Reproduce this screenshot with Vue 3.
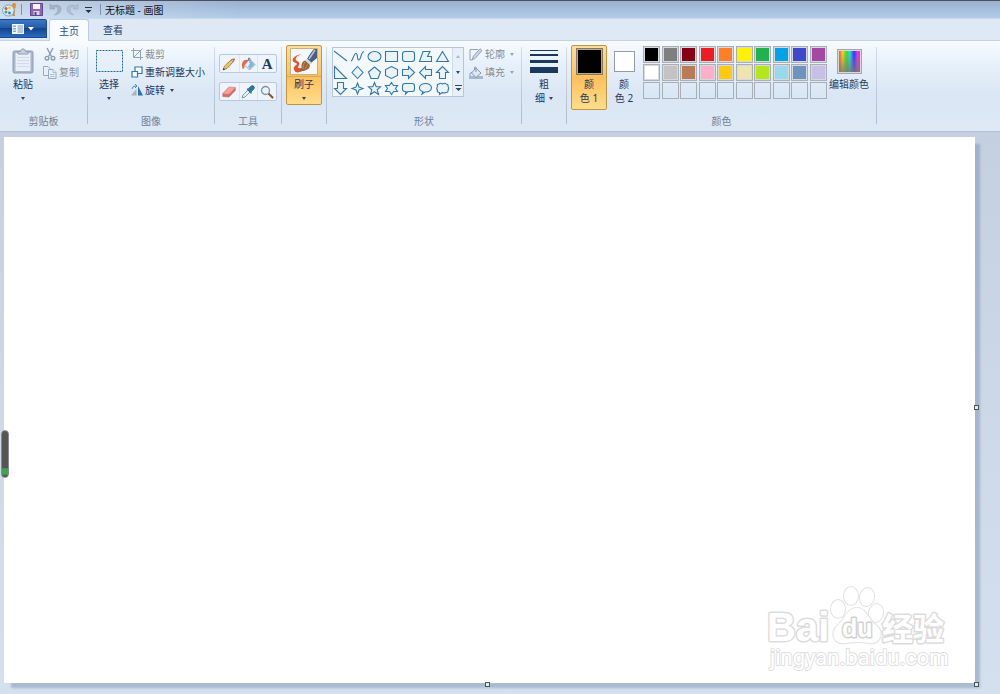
<script setup>
import { ref } from 'vue'

const palette = [
  '#000000', '#7f7f7f', '#880015', '#ed1c24', '#ff7f27', '#fff200', '#22b14c', '#00a2e8', '#3f48cc', '#a349a4',
  '#ffffff', '#c3c3c3', '#b97a57', '#ffaec9', '#ffc90e', '#efe4b0', '#b5e61d', '#99d9ea', '#7092be', '#c8bfe7',
  '', '', '', '', '', '', '', '', '', '',
]

const shapes = [
  { name: '直线', d: 'M1 2L14 12' },
  { name: '曲线', d: 'M1 12C3 12 3.500 4.500 6 4.500C8.500 4.500 6.500 11.500 9 11C11.500 10 10.500 3 14 2.500' },
  { name: '椭圆形', d: 'M1 7.500A6.500 5 0 1 1 14 7.500A6.500 5 0 1 1 1 7.500Z' },
  { name: '矩形', d: 'M1.500 2.500H13.500V12.500H1.500Z' },
  { name: '圆角矩形', d: 'M4 2.500H11Q13.500 2.500 13.500 5V10Q13.500 12.500 11 12.500H4Q1.500 12.500 1.500 10V5Q1.500 2.500 4 2.500Z' },
  { name: '多边形', d: 'M5 2.500H12L9.500 7.500H13.500V12.500H1.500Z' },
  { name: '三角形', d: 'M7.500 2.500L13.500 12.500H1.500Z' },
  { name: '直角三角形', d: 'M1.500 1.500L13.500 13.500H1.500Z' },
  { name: '菱形', d: 'M7.500 1.500L13 7.500L7.500 13.500L2 7.500Z' },
  { name: '五边形', d: 'M7.500 2L13.500 7L11 13.500H4L1.500 7Z' },
  { name: '六边形', d: 'M7.500 1.500L13.500 4.500V10.500L7.500 13.500L1.500 10.500V4.500Z' },
  { name: '右箭头', d: 'M1.500 4.500H7.500V1.500L13.500 7.500L7.500 13.500V10.500H1.500Z' },
  { name: '左箭头', d: 'M13.500 4.500H7.500V1.500L1.500 7.500L7.500 13.500V10.500H13.500Z' },
  { name: '上箭头', d: 'M4.500 13.500V7.500H1.500L7.500 1.500L13.500 7.500H10.500V13.500Z' },
  { name: '下箭头', d: 'M4.500 1.500V7.500H1.500L7.500 13.500L13.500 7.500H10.500V1.500Z' },
  { name: '四角星', d: 'M7.500 2L9 6L13 7.500L9 9L7.500 13L6 9L2 7.500L6 6Z' },
  { name: '五角星', d: 'M7.500 1.500L9.200 5.800H13.500L10.200 8.800L11.500 13.500L7.500 10.700L3.500 13.500L4.800 8.800L1.500 5.800H5.800Z' },
  { name: '六角星', d: 'M7.500 1.500L9.500 4.500H13.500L11.500 7.500L13.500 10.500H9.500L7.500 13.500L5.500 10.500H1.500L3.500 7.500L1.500 4.500H5.500Z' },
  { name: '圆角矩形标注', d: 'M4 2.500H11Q13.500 2.500 13.500 5V8Q13.500 10.500 11 10.500H7L4.500 13L5 10.500H4Q1.500 10.500 1.500 8V5Q1.500 2.500 4 2.500Z' },
  { name: '椭圆形标注', d: 'M4 13L5 10.700C-1 9 1 2.500 7.500 2.500C15.500 2.500 15.500 11 7 11Z' },
  { name: '云形标注', d: 'M4 3Q5.500 1.500 7.500 3Q10 1.500 11 3Q13.500 3 13 5.500Q14.500 7.500 13 9Q13.500 11.500 11 11.500Q9 12.500 7.500 11.500L4.500 13.500V11.500Q1.500 11.500 2.500 9Q1 7.500 2.500 5.500Q1.500 3 4 3Z' },
]

const fore = ref('#000000')
const back = ref('#ffffff')
</script>

<template>
  <div class="paint">
    <header class="titlebar">
      <svg class="logo" width="15" height="15" viewBox="0 0 15 15">
        <ellipse cx="6.500" cy="8.500" rx="6" ry="5.500" fill="#d3ecfa" stroke="#6fa9cf" />
        <circle cx="4" cy="6.500" r="1.500" fill="#e94f35" />
        <circle cx="7.500" cy="6" r="1.300" fill="#f3be24" />
        <circle cx="4" cy="10" r="1.500" fill="#54a948" />
        <circle cx="7.500" cy="11" r="1.400" fill="#3f79c5" />
        <path d="M12 6L10.500 14H13Z" fill="#d28a2e" />
        <path d="M10 2Q12.500 0 14 2L13.500 6.500H11Z" fill="#ef8b22" />
      </svg>
      <span class="bar"></span>
      <button class="quick" aria-label="保存">
        <svg width="13" height="13" viewBox="0 0 13 13">
          <path d="M.5.500H12.500V12.500H.500Z" fill="#8f65b6" stroke="#60458d" />
          <path d="M3 1H10V6H3Z" fill="#f7f4fb" /><path d="M3.500 8H9.500V12H3.500Z" fill="#d8cfe5" /><path d="M4.500 9H6.500V12H4.500Z" fill="#5d4688" />
        </svg>
      </button>
      <button class="quick" aria-label="撤消">
        <svg width="13" height="13" viewBox="0 0 13 13"><path d="M1 1V6H6L4.300 4.500Q9 2.500 9 6.500Q9 9.500 5.500 12Q12.500 10.500 12 5.500Q11 .5 3.200 2.800Z" fill="#a7b5ca" stroke="#8d9db6" stroke-width=".6" /></svg>
      </button>
      <button class="quick redo" aria-label="重做">
        <svg width="13" height="13" viewBox="0 0 13 13"><path d="M12 1V6H7L8.700 4.500Q4 2.500 4 6.500Q4 9.500 7.500 12Q.5 10.500 1 5.500Q2 .5 9.800 2.800Z" fill="#b2c1d6" stroke="#98a9c1" stroke-width=".6" /></svg>
      </button>
      <button class="quick more" aria-label="自定义快速访问工具栏">
        <svg width="7" height="6" viewBox="0 0 7 6"><path d="M0 0H7V1H0ZM.5 3H6.500L3.500 6Z" fill="#27303d" /></svg>
      </button>
      <span class="bar"></span>
      <h1>无标题 - 画图</h1>
    </header>

    <nav class="tabs">
      <button class="file" aria-label="文件">
        <svg width="12" height="10" viewBox="0 0 12 10"><path d="M0 0H12V10H0Z" fill="#f5f9ff" /><path d="M1 1.500H4V3H1ZM1 4H4V5.500H1ZM1 6.500H4V8H1Z" fill="#87a8da" /><path d="M5.500 2H11M5.500 4H11M5.500 6H11M5.500 8H11" stroke="#4d79bd" stroke-width=".8" /></svg>
        <svg width="6" height="4" viewBox="0 0 6 4"><path d="M0 0H6L3 3.500Z" fill="#fff" /></svg>
      </button>
      <button class="tab active">主页</button>
      <button class="tab">查看</button>
    </nav>

    <section class="ribbon">
      <div class="group clipboard">
        <div class="body">
          <button class="big">
            <span class="pic">
              <svg width="22" height="26" viewBox="0 0 22 26">
                <rect x="1" y="3" width="20" height="22" rx="1.500" fill="#a9b6cb" stroke="#8f9db6" />
                <path d="M3.500 5H18.500V23H3.500Z" fill="#e9eff8" />
                <path d="M5 9.500H17M5 12.500H17M5 15.500H17M5 18.500H17" stroke="#d1dae8" />
                <path d="M6 6V3.500H8.500Q9 .8 11 .8Q13 .8 13.500 3.500H16V6Z" fill="#c7d1df" stroke="#8f9db6" />
              </svg>
            </span>
            粘贴
            <i class="arrow"></i>
          </button>
          <div class="list">
            <button class="row" disabled>
              <svg width="14" height="14" viewBox="0 0 14 14" fill="none" stroke="#8b9bb4" stroke-width="1.400"><path d="M4 1L8.500 9.500M10 1L5.500 9.500" /><circle cx="4" cy="11.200" r="1.800" /><circle cx="10" cy="11.200" r="1.800" /></svg>
              剪切
            </button>
            <button class="row" disabled>
              <svg width="14" height="14" viewBox="0 0 14 14" fill="#e9eff8" stroke="#9aa9c0"><path d="M.5 1.500H5L7.500 4V10.500H.500Z" /><path d="M5.500 4.500H10L13 7.500V13.500H5.500Z" /><path d="M10 4.500V7.500H13M7 9.500H11.500M7 11.500H11.500" stroke-width=".7" /></svg>
              复制
            </button>
          </div>
        </div>
        <div class="caption">剪贴板</div>
      </div>
      <span class="sep"></span>

      <div class="group image">
        <div class="body">
          <button class="big">
            <span class="pic">
              <svg width="27" height="22" viewBox="0 0 27 22"><path d="M.5.500H26.500V21.500H.500Z" fill="#e4effa" fill-opacity=".6" stroke="#1f6a9c" stroke-dasharray="2 1" /></svg>
            </span>
            选择
            <i class="arrow"></i>
          </button>
          <div class="list">
            <button class="row" disabled>
              <svg width="12" height="12" viewBox="0 0 12 12" fill="none" stroke="#93a2b9"><path d="M2.500 0V9.500H12M0 2.500H9.500V12M2.500 9.500L11.500.500" /></svg>
              裁剪
            </button>
            <button class="row">
              <svg width="12" height="12" viewBox="0 0 12 12" fill="#fff" stroke="#2f78b2" stroke-width="1.200"><path d="M4 1H11V7.500H4Z" /><path d="M1 5.500H6.500V11H1Z" /></svg>
              重新调整大小
            </button>
            <button class="row">
              <svg width="12" height="12" viewBox="0 0 12 12"><path d="M5.500 5V11.500H0Z" fill="#a9b3bf" /><path d="M7 2V11.500H12Z" fill="#2a74ac" /><path d="M1 5Q1.500 1.500 5 2M4 0L6 2L4 4" fill="none" stroke="#3a8fd0" /></svg>
              旋转
              <i class="arrow"></i>
            </button>
          </div>
        </div>
        <div class="caption">图像</div>
      </div>
      <span class="sep"></span>

      <div class="group tools">
        <div class="body">
          <div class="toolrow">
            <button aria-label="铅笔">
              <svg width="14" height="14" viewBox="0 0 14 14"><path d="M1 13L2.500 9L10 2L12 4L5 11.500Z" fill="#efc45d" stroke="#7d6540" stroke-width=".7" /><path d="M10 2Q12 .5 13 2Q13.500 3 12 4Z" fill="#de6d62" /><path d="M1 13L1.700 11L3 12.300Z" fill="#222" /><path d="M9 3L11 5" stroke="#9d9d9d" /></svg>
            </button>
            <button aria-label="用颜色填充">
              <svg width="15" height="14" viewBox="0 0 15 14"><path d="M8.500 2L14 7.500L8.500 13L3.500 8Z" fill="#e3f1fb" stroke="#7798b4" stroke-width=".8" /><path d="M10 4L13.500 7.500L9 12L7 10Z" fill="#81b8df" /><path d="M9 6V2Q9 .5 7.500 1V4" fill="none" stroke="#567594" stroke-width=".8" /><path d="M8 3Q3 2 1.500 5Q.3 7.500 1.500 12Q4 12 3.500 8Q5 6 8 3Z" fill="#e56d40" /></svg>
            </button>
            <button aria-label="文本">
              <span class="letter">A</span>
            </button>
          </div>
          <div class="toolrow">
            <button aria-label="橡皮擦">
              <svg width="14" height="12" viewBox="0 0 14 12"><path d="M.8 7.500L7 1L13.300 1.500V4.500L7 11L.8 10.500Z" fill="#d56f6b" stroke="#b56a67" stroke-width=".6" /><path d="M.8 7.500L7 1L13.300 1.500L7 8Z" fill="#f3a29b" /></svg>
            </button>
            <button aria-label="颜色选取器">
              <svg width="14" height="14" viewBox="0 0 14 14"><path d="M1 13L2 10L7 5L9 7L4 12Z" fill="#e6f1f8" stroke="#6b8198" stroke-width=".8" /><path d="M6 4L7.500 3.500L10 1Q12 0 13 1.500Q14 3 12.500 4.500L10.500 6.500L10 8.500Z" fill="#2777b0" stroke="#25577f" stroke-width=".6" /></svg>
            </button>
            <button aria-label="放大镜">
              <svg width="14" height="14" viewBox="0 0 14 14"><path d="M8.500 8.500L12.500 12.500" stroke="#8e572f" stroke-width="2.200" stroke-linecap="round" /><circle cx="5.500" cy="5.500" r="4" fill="#e5f4fd" stroke="#83929f" stroke-width="1.300" /></svg>
            </button>
          </div>
        </div>
        <div class="caption">工具</div>
      </div>
      <span class="sep"></span>

      <div class="group brush">
        <div class="body">
          <button class="big hot split">
            <span class="pic">
              <svg width="28" height="27" viewBox="0 0 28 27">
                <path d="M.5.500H27.500V26.500H.500Z" fill="#f4f8fa" stroke="#c6b17d" />
                <path d="M12 6Q5 7 3 10.500Q1.500 14 6 15Q8 16 5 18Q2 20.500 5.500 24Q9 25.500 14 22L11 20Q7 21 8.500 18Q11 15 7 13Q4.500 11.500 6.500 9Q8.500 7 12 6Z" fill="#e2532f" />
                <path d="M27 1V10L21 15L17 11Q21 4 24 1Z" fill="#495f84" /><path d="M25 2L19 11" stroke="#b4c5dc" stroke-width="1.500" />
                <path d="M17 10.500L22 15L20 17L15 12.500Z" fill="#d3d8db" />
                <path d="M15 12.500L20 17Q20 21 15 22.500Q12 23.500 9 23Q12 21 11.500 18Q11.500 13.500 15 12.500Z" fill="#9b6539" /><path d="M15 14Q12.500 17 13 21M17.500 16.500L15 21" fill="none" stroke="#c48b54" />
              </svg>
            </span>
            刷子
            <i class="arrow"></i>
          </button>
        </div>
      </div>
      <span class="sep"></span>

      <div class="group shapes">
        <div class="body">
          <div class="gallery">
            <div class="grid">
              <button v-for="s in shapes" :key="s.name" :aria-label="s.name">
                <svg width="15" height="15" viewBox="0 0 15 15"><path :d="s.d" :fill="s.d.endsWith('Z') ? '#e9f4f8' : 'none'" stroke="#3577ad" stroke-width="1.100" /></svg>
              </button>
            </div>
            <div class="scroller">
              <button aria-label="上一行" disabled><i class="arrow up"></i></button>
              <button aria-label="下一行"><i class="arrow"></i></button>
              <button aria-label="更多形状"><svg width="7" height="6" viewBox="0 0 7 6"><path d="M0 0H7V1H0ZM.5 3H6.500L3.500 6Z" fill="#34465f" /></svg></button>
            </div>
          </div>
          <div class="list">
            <button class="row" disabled>
              <svg width="14" height="13" viewBox="0 0 14 13" fill="none" stroke="#94a3ba"><path d="M9 1.500H1V12H3" /><path d="M3 12L4.500 8L11 .8L13 2.500L6.500 10Z" fill="#cbd5e3" /></svg>
              轮廓
              <i class="arrow"></i>
            </button>
            <button class="row" disabled>
              <svg width="14" height="13" viewBox="0 0 14 13"><path d="M0 10H14V13H0Z" fill="#a9b7cb" /><path d="M7 2L12 7L7 11.500L2.500 7Z" fill="#dfe7f2" stroke="#8797b0" /><path d="M7 6V1.500Q6.500 0 5.500 1.500V4M3 6Q0 7 1 10" fill="none" stroke="#8797b0" /></svg>
              填充
              <i class="arrow"></i>
            </button>
          </div>
        </div>
        <div class="caption">形状</div>
      </div>
      <span class="sep"></span>

      <div class="group size">
        <div class="body">
          <button class="big">
            <span class="pic">
              <svg width="28" height="24" viewBox="0 0 28 24" fill="#1b385f"><path d="M0 1H28V2H0ZM0 5H28V7H0ZM0 11H28V14H0ZM0 18H28V24H0Z" /></svg>
            </span>
            粗
            <span class="inline">细<i class="arrow"></i></span>
          </button>
        </div>
      </div>
      <span class="sep"></span>

      <div class="group colors">
        <div class="body">
          <button class="big hot chosen">
            <span class="pic"><span class="chip large" :style="{ background: fore }"></span></span>
            颜<br>色 1
          </button>
          <button class="big second">
            <span class="pic"><span class="chip" :style="{ background: back }"></span></span>
            颜<br>色 2
          </button>
          <div class="palette">
            <button
              v-for="(c, i) in palette"
              :key="i"
              :aria-label="c ? '颜色 ' + c : '自定义颜色'"
              :class="{ filled: c }"
              :style="{ background: c || 'transparent' }"
              @click="c && (fore = c)"
            ></button>
          </div>
          <button class="big edit">
            <span class="pic"><span class="spectrum"></span></span>
            编辑颜色
          </button>
        </div>
        <div class="caption">颜色</div>
      </div>
      <span class="sep"></span>
    </section>

    <main class="workspace">
      <div class="canvas">
        <span class="handle right"></span>
        <span class="handle bottom"></span>
        <span class="handle corner"></span>
        <svg class="mark" width="184" height="92" viewBox="0 0 184 92">
          <g class="outline">
            <ellipse cx="73" cy="26" rx="7" ry="9" />
            <ellipse cx="86" cy="13" rx="7" ry="9" />
            <ellipse cx="102" cy="14" rx="7" ry="9" transform="rotate(12 102 14)" />
            <ellipse cx="111" cy="30" rx="7" ry="9" transform="rotate(12 111 30)" />
            <path d="M92 25C82 25 80 36 73 42C64 50 69 62 81 60Q92 58 103 60C115 62 120 50 111 42C103 36 101 25 92 25Z" />
          </g>
          <text class="latin" x="2" y="58" font-size="40">Bai</text>
          <text class="latin inner" x="77" y="54" font-size="25">du</text>
          <text class="han" x="117" y="57" font-size="31">经验</text>
          <text class="url" x="5" y="82" font-size="22">jingyan.baidu.com</text>
        </svg>
      </div>
      <span class="recorder"></span>
    </main>
  </div>
</template>

<style>
body {
  margin: 0;
}
</style>

<style scoped>
.paint {
  display: flex;
  flex-direction: column;
  min-height: 100vh;
  font: 10px/14px "Noto Sans", "Noto Sans CJK SC", sans-serif;
  color: #1e395b;
  background: #d0dbea;
}
.paint *,
.paint {
  box-sizing: border-box;
}
button {
  font: inherit;
  color: inherit;
  margin: 0;
  padding: 0;
  border: 0;
  background: none;
}
svg {
  display: block;
  flex: none;
}
.titlebar {
  display: flex;
  align-items: center;
  height: 18px;
  padding: 0 2px;
  border-top: 1px solid #4b505c;
  background: linear-gradient(to right, rgba(232, 240, 250, 0.55), rgba(232, 240, 250, 0) 240px), linear-gradient(#9ab1cf, #b1cce7);
}
.bar {
  width: 1px;
  height: 11px;
  margin-left: 4px;
  background: #7e92ad;
}
.quick {
  margin-left: 6px;
}
.bar + .quick {
  margin-left: 8px;
}
.redo {
  margin-left: 4px;
}
.more {
  margin-left: 6px;
}
.more + .bar {
  margin-left: 8px;
}
.titlebar h1 {
  margin: 0 0 0 4px;
  font-size: 10px;
  font-weight: 400;
  color: #111;
}
.tabs {
  display: flex;
  height: 23px;
  border-top: 1px solid #c8d9ec;
  border-bottom: 1px solid #c3d3e6;
  background: #dfe9f5;
}
.file {
  display: flex;
  align-items: center;
  justify-content: center;
  gap: 4px;
  width: 47px;
  height: 19px;
  border: 1px solid #1b4a92;
  border-left: 0;
  border-radius: 0 2px 0 0;
  background: linear-gradient(#3c77c4, #2259a8 48%, #12448f 50%, #2a6cbd);
}
.tab {
  width: 40px;
  height: 22px;
  margin-left: 4px;
}
.tab.active {
  height: 23px;
  margin-left: 2px;
  border: 1px solid #bccce0;
  border-bottom: 0;
  border-radius: 3px 3px 0 0;
  background: #f8fbff;
  color: #1f4f91;
}
.ribbon {
  display: flex;
  padding-top: 4px;
  border-bottom: 1px solid #b3c2d6;
  background: linear-gradient(#f6fbff, #e6f0fa 28%, #dae6f4 60%, #dfe9f6);
}
.group {
  display: flex;
  flex-direction: column;
}
.body {
  display: flex;
  align-items: flex-start;
  height: 69px;
}
.caption {
  line-height: 15px;
  height: 17px;
  text-align: center;
  color: #6f8199;
}
.sep {
  width: 1px;
  margin: 2px 0 7px;
  background: linear-gradient(#d3deeb, #aebccf);
}
.big {
  display: flex;
  flex-direction: column;
  align-items: center;
  width: 30px;
  line-height: 14px;
  white-space: nowrap;
}
.pic {
  display: flex;
  align-items: center;
  justify-content: center;
  height: 32px;
}
.arrow {
  flex: none;
  width: 0;
  height: 0;
  border: 2px solid transparent;
  border-top: 3px solid #34465f;
  border-bottom: 0;
}
.arrow.up {
  border-top: 0;
  border-bottom: 3px solid #a9b5c5;
}
.big > .arrow {
  margin-top: 6px;
}
.inline {
  display: flex;
  align-items: center;
  gap: 4px;
}
.row {
  display: flex;
  align-items: center;
  gap: 2px;
  height: 18px;
  white-space: nowrap;
}
.row:disabled {
  color: #8d8d8d;
}
.row .arrow {
  margin-left: 3px;
}
.row:disabled .arrow {
  border-top-color: #9aa4b2;
}
.clipboard {
  width: 87px;
}
.clipboard .body {
  padding-left: 8px;
}
.clipboard .list {
  margin-left: 5px;
}
.image {
  width: 126px;
}
.image .body {
  padding-left: 6px;
}
.image .list {
  margin-left: 7px;
}
.tools {
  width: 66px;
}
.tools .body {
  flex-direction: column;
  gap: 9px;
  padding: 9px 4px 0;
}
.toolrow {
  display: grid;
  grid-template-columns: repeat(3, 1fr);
  width: 58px;
  height: 19px;
  border: 1px solid #b9c8da;
  border-radius: 2px;
  background: #eef4fb;
}
.toolrow button {
  display: flex;
  align-items: center;
  justify-content: center;
}
.toolrow button + button {
  border-left: 1px solid #dbe4ef;
}
.letter {
  font: bold 15px/16px "Liberation Serif", serif;
  color: #1f3b61;
}
.brush,
.size {
  width: 44px;
}
.brush .body {
  padding-left: 4px;
}
.hot {
  width: 36px;
  border: 1px solid #c2953f;
  border-radius: 2px;
  background: linear-gradient(#fddc9f, #fcc667 45%, #fdbf5c 50%, #ffdd8c);
}
.hot .pic {
  height: 31px;
}
.split {
  height: 60px;
}
.split .pic {
  width: 34px;
  border-bottom: 1px solid #d9a750;
}
.shapes {
  width: 194px;
}
.shapes .body {
  padding-left: 5px;
}
.gallery {
  display: flex;
  margin-top: 2px;
  border: 1px solid #b6c6d9;
  background: #f3f8fd;
}
.grid {
  display: grid;
  grid-template-columns: repeat(7, 17px);
  grid-auto-rows: 16px;
}
.grid button {
  display: flex;
  align-items: center;
}
.scroller {
  display: grid;
  grid-template-rows: repeat(3, 1fr);
  width: 11px;
  border-left: 1px solid #d0dbe8;
  background: #e7eff8;
}
.scroller button {
  display: flex;
  align-items: center;
  justify-content: center;
}
.shapes .list {
  margin-left: 5px;
}
.size .body {
  padding-left: 7px;
}
.colors {
  width: 309px;
}
.colors .body {
  padding-left: 4px;
}
.chosen {
  height: 65px;
}
.second {
  margin-left: 2px;
}
.chip {
  width: 21px;
  height: 21px;
  border: 1px solid #969ca5;
}
.large {
  width: 27px;
  height: 27px;
  border-color: #8a7a59;
  box-shadow: inset 0 0 0 1px #b3aa8c;
}
.palette {
  display: grid;
  grid-template-columns: repeat(10, 17px);
  grid-auto-rows: 17px;
  justify-content: space-between;
  row-gap: 1px;
  width: 184px;
  margin: 1px 0 0 4px;
}
.palette button {
  border: 1px solid #a9afb7;
}
.palette .filled {
  box-shadow: inset 0 0 0 1px #d6dade;
}
.edit {
  width: 40px;
  margin-left: 2px;
}
.spectrum {
  width: 25px;
  height: 25px;
  border: 1px solid #a3a6aa;
  box-shadow: inset 0 0 0 1px #d9d9d9;
  background: linear-gradient(transparent 15%, rgba(120, 120, 120, 0.85)), linear-gradient(to right, #f33, #fc2 20%, #3d3 38%, #2dd 52%, #33f 70%, #e3e 85%, #f35);
}
.workspace {
  position: relative;
  flex: 1;
  display: flex;
  padding: 5px 25px 11px 4px;
  background: linear-gradient(#c4cfe0, #d5e0ef);
}
.canvas {
  position: relative;
  flex: 1;
  background: #fff;
  box-shadow: 6px 6px 2px -1px rgba(128, 148, 178, 0.5);
}
.handle {
  position: absolute;
  width: 5px;
  height: 5px;
  border: 1px solid #4c535b;
  background: #dff2dd;
}
.right {
  right: -4px;
  bottom: 50%;
}
.bottom {
  right: 50%;
  bottom: -4px;
}
.corner {
  right: -4px;
  bottom: -4px;
}
.recorder {
  position: absolute;
  left: 1px;
  top: 53%;
  width: 8px;
  height: 48px;
  border: 1px solid #8b8b8b;
  border-radius: 4px;
  background: linear-gradient(#555 80%, #3ba84e 82%, #3ba84e 94%, #555 96%);
}
.mark {
  position: absolute;
  right: 26px;
  bottom: 8px;
}
.outline,
.mark text {
  fill: #fff;
  stroke: #dcdcdc;
  stroke-width: 3px;
  stroke-linejoin: round;
  paint-order: stroke;
}
.outline {
  stroke: #e2e2e2;
  stroke-width: 2px;
}
.latin {
  font-family: "Liberation Sans", sans-serif;
  font-weight: 700;
}
.mark .inner {
  stroke: #d2d2d2;
}
.han {
  font-family: "Noto Sans CJK SC", sans-serif;
  font-weight: 700;
}
.mark .url {
  font-family: Roboto, sans-serif;
  stroke: #e0e0e0;
  stroke-width: 2px;
}
</style>
